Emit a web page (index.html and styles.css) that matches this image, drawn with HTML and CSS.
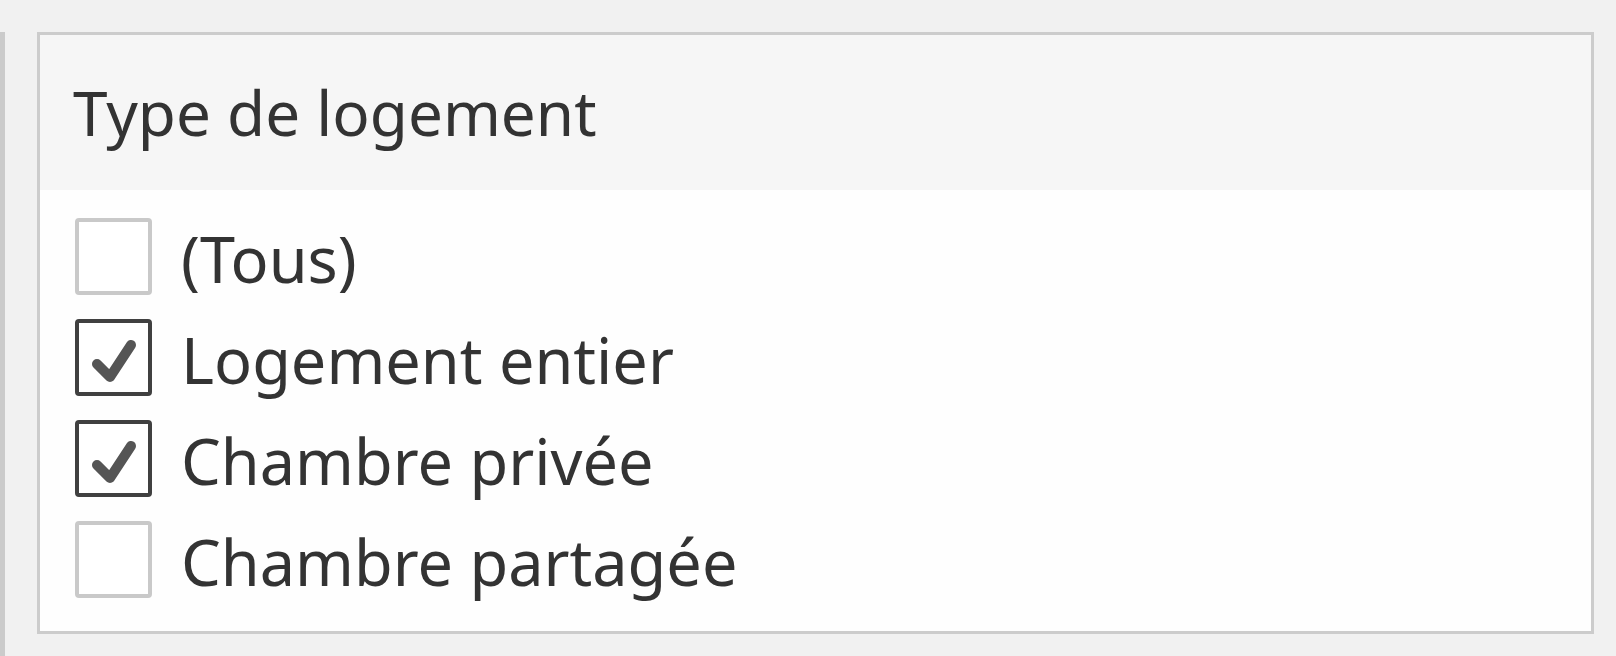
FILE: index.html
```html
<!DOCTYPE html>
<html lang="fr">
<head>
<meta charset="utf-8">
<title>Type de logement</title>
<link rel="stylesheet" href="styles.css">
</head>
<body>
<div class="page">
  <div class="side-strip"></div>
  <section class="filter">
    <header class="filter-title">Type de logement</header>
    <ul class="filter-list">
      <li class="item">
        <span class="box"></span>
        <span class="label">(Tous)</span>
      </li>
      <li class="item">
        <span class="box checked"><svg viewBox="0 0 77 77" class="tick"><path d="M22 45 L35 58 L56 26"/></svg></span>
        <span class="label">Logement entier</span>
      </li>
      <li class="item">
        <span class="box checked"><svg viewBox="0 0 77 77" class="tick"><path d="M22 45 L35 58 L56 26"/></svg></span>
        <span class="label">Chambre privée</span>
      </li>
      <li class="item">
        <span class="box"></span>
        <span class="label">Chambre partagée</span>
      </li>
    </ul>
  </section>
</div>
</body>
</html>
```

FILE: styles.css
```css
html, body {
  margin: 0;
  padding: 0;
  background: #f1f1f1;
  height: 100%;
}

.page {
  display: flex;
  align-items: flex-start;
  height: 656px;
  padding-top: 32px;
  box-sizing: border-box;
  font-family: "Noto Sans", "Open Sans", sans-serif;
  color: #333333;
}

.side-strip {
  width: 5px;
  align-self: stretch;
  background: #cbcbcb;
}

.filter {
  margin-left: 32px;
  width: 1557px;
  height: 602px;
  box-sizing: border-box;
  border: 3px solid #cccccc;
  background: #fefefe;
  display: flex;
  flex-direction: column;
}

.filter-title {
  height: 155px;
  background: #f6f6f6;
  padding-left: 33px;
  display: flex;
  align-items: center;
  font-size: 62px;
  line-height: 1;
  padding-bottom: 2px;
  box-sizing: border-box;
}

.filter-list {
  list-style: none;
  margin: 0;
  padding: 28px 0 0 35px;
  display: flex;
  flex-direction: column;
  gap: 24px;
}

.item {
  display: flex;
  align-items: center;
  gap: 29px;
  height: 77px;
}

.box {
  width: 77px;
  height: 77px;
  box-sizing: border-box;
  border: 4px solid #c9c9c9;
  border-radius: 4px;
  background: #ffffff;
  position: relative;
  flex: none;
}

.box.checked {
  border-color: #404040;
}

.tick {
  position: absolute;
  left: -4px;
  top: -4px;
  width: 77px;
  height: 77px;
}

.tick path {
  fill: none;
  stroke: #555555;
  stroke-width: 10;
  stroke-linecap: round;
  stroke-linejoin: round;
}

.label {
  font-size: 63px;
  line-height: 1;
  white-space: nowrap;
  padding-top: 4px;
}
```
